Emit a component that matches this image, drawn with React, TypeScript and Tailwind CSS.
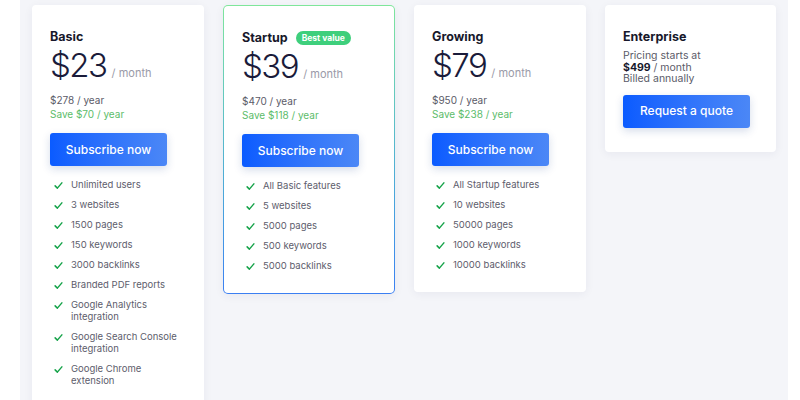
import React from 'react';

type Plan = {
  name: string;
  price: string;
  yearly: string;
  save: string;
  features: string[];
  badge?: boolean;
};

const plans: Plan[] = [
  {
    name: 'Basic',
    price: '$23',
    yearly: '$278 / year',
    save: 'Save $70 / year',
    features: [
      'Unlimited users',
      '3 websites',
      '1500 pages',
      '150 keywords',
      '3000 backlinks',
      'Branded PDF reports',
      'Google Analytics integration',
      'Google Search Console integration',
      'Google Chrome extension',
    ],
  },
  {
    name: 'Startup',
    price: '$39',
    yearly: '$470 / year',
    save: 'Save $118 / year',
    badge: true,
    features: ['All Basic features', '5 websites', '5000 pages', '500 keywords', '5000 backlinks'],
  },
  {
    name: 'Growing',
    price: '$79',
    yearly: '$950 / year',
    save: 'Save $238 / year',
    features: ['All Startup features', '10 websites', '50000 pages', '1000 keywords', '10000 backlinks'],
  },
];

const Check = () => (
  <svg viewBox="0 0 12 12" className="w-[9px] h-[9px] mt-[2px] shrink-0" fill="none">
    <path d="M1.5 6.5 L4.5 9.5 L10.5 2.5" stroke="#16a34a" strokeWidth="2" strokeLinecap="round" strokeLinejoin="round" />
  </svg>
);

const PrimaryButton = ({ label, width }: { label: string; width: string }) => (
  <button
    className={`${width} h-[33px] rounded-[3px] bg-gradient-to-r from-[#0a5bff] to-[#4b87f6] text-white text-[12px] font-medium shadow-[0_3px_8px_rgba(20,60,140,0.18)]`}
  >
    {label}
  </button>
);

const PlanCard = ({ plan }: { plan: Plan }) => {
  const border = plan.badge
    ? 'p-px bg-gradient-to-b from-[#7fe69a] to-[#3b7ff2]'
    : 'p-0 bg-transparent';
  return (
    <div className={`w-[172px] rounded-[5px] shadow-[0_2px_10px_rgba(30,40,80,0.06)] ${border}`}>
      <div className="bg-white rounded-[4px] pt-[23px] pl-[18px] pr-[14px] pb-[21px]">
        {/* Header */}
        <div className="flex items-center gap-[8px] h-[18px]">
          <h2 className="text-[12.5px] font-bold text-[#17182b]">{plan.name}</h2>
          {plan.badge && (
            <span className="bg-[#3ecf7c] text-white text-[8.5px] font-bold rounded-full px-[6px] h-[14px] leading-[14px]">
              Best value
            </span>
          )}
        </div>

        {/* Price */}
        <div className="flex items-baseline mt-[3px] h-[34px] leading-none">
          <span className="text-[33px] font-light text-[#1a1b3a] tracking-[-1.5px] leading-none">{plan.price}</span>
          <span className="text-[11px] text-[#9a9aa8] ml-[5px] leading-none">/ month</span>
        </div>

        <div className="mt-[10px] text-[10px] leading-[14px]">
          <p className="text-[#5b5b68]">{plan.yearly}</p>
          <p className="text-[#5cbc6a]">{plan.save}</p>
        </div>

        <div className="mt-[12px]">
          <PrimaryButton label="Subscribe now" width="w-[117px]" />
        </div>

        {/* Features */}
        <ul className="mt-[13px] flex flex-col gap-[8px]">
          {plan.features.map((f) => (
            <li key={f} className="flex gap-[8px] pl-[4px] text-[9.5px] leading-[12px] text-[#5d5d6c]">
              <Check />
              <span className="max-w-[112px]">{f}</span>
            </li>
          ))}
        </ul>
      </div>
    </div>
  );
};

export default function App() {
  return (
    <div className="w-[800px] h-[400px] bg-white overflow-hidden font-['Inter',_'Liberation_Sans',_sans-serif]">
      <div className="ml-[20px] w-[768px] h-full bg-[#f4f5f9] pl-[12px] pt-[5px]">
        <div className="flex items-start gap-[19px]">
          {plans.map((p) => (
            <PlanCard key={p.name} plan={p} />
          ))}

          {/* Enterprise */}
          <div className="w-[171px] bg-white rounded-[4px] shadow-[0_2px_10px_rgba(30,40,80,0.06)] pt-[23px] pl-[18px] pr-[14px] pb-[24px]">
            <h2 className="text-[12.5px] font-bold text-[#17182b] h-[18px] leading-[18px]">Enterprise</h2>
            <div className="mt-[4px] text-[10.5px] leading-[11.5px] text-[#5b5b68]">
              <p>Pricing starts at</p>
              <p>
                <span className="font-bold text-[#17182b]">$499</span> / month
              </p>
              <p>Billed annually</p>
            </div>
            <div className="mt-[10px]">
              <PrimaryButton label="Request a quote" width="w-[127px]" />
            </div>
          </div>
        </div>
      </div>
    </div>
  );
}
